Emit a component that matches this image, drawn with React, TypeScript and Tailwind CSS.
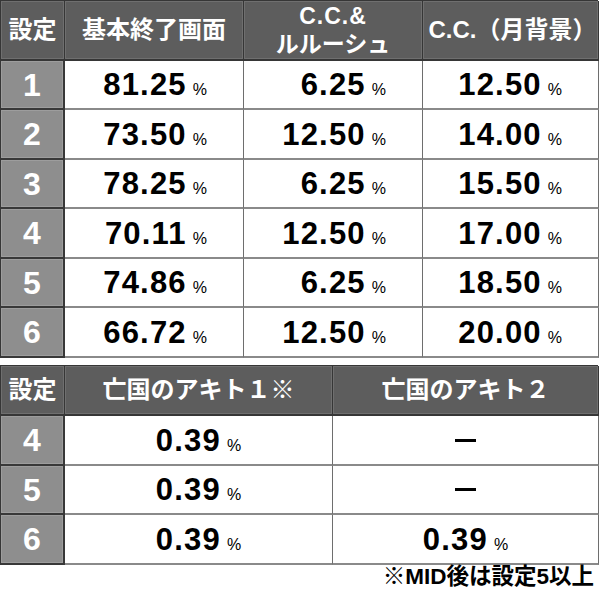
import type { ReactNode } from 'react';

const font = "font-['Liberation_Sans','Noto_Sans_CJK_JP',sans-serif]";

const top = [
  ['1', '81.25', '6.25', '12.50'],
  ['2', '73.50', '12.50', '14.00'],
  ['3', '78.25', '6.25', '15.50'],
  ['4', '70.11', '12.50', '17.00'],
  ['5', '74.86', '6.25', '18.50'],
  ['6', '66.72', '12.50', '20.00'],
];

const bottom: [string, string, string | null][] = [
  ['4', '0.39', null],
  ['5', '0.39', null],
  ['6', '0.39', '0.39'],
];

function HeadCell({ children }: { children: ReactNode }) {
  return (
    <div className="flex items-center justify-center bg-[#5d5d5d] border-r border-b-2 border-[#363636] shadow-[inset_0_0_0_1px_#6f6f6f] text-white font-bold text-[24px] leading-none whitespace-nowrap">
      {children}
    </div>
  );
}

function SetCell({ n }: { n: string }) {
  return (
    <div className="flex items-center justify-center bg-[#8e8e8e] border-r-2 border-b-2 border-[#383838] shadow-[inset_0_0_0_1px_#9d9d9d] text-white font-bold text-[32px] leading-none">
      {n}
    </div>
  );
}

function Value({ v }: { v: string }) {
  return (
    <span className="flex items-baseline">
      <span className="font-bold text-[31px] tracking-[1.2px] leading-none text-black">{v}</span>
      <span className="ml-[6px] text-[16px] leading-none text-black">%</span>
    </span>
  );
}

export default function App() {
  return (
    <div className={`w-[600px] h-[590px] bg-white ${font}`}>
      <div className="w-[598px] grid grid-cols-[64px_179px_179px_176px] grid-rows-[60px_49px_50px_49px_50px_49px_50px] border-l border-t border-[#363636]">
        <HeadCell>設定</HeadCell>
        <HeadCell>基本終了画面</HeadCell>
        <HeadCell>
          <div className="flex flex-col items-center gap-[5px]">
            <span className="text-[23px] tracking-[1px]">C.C.&amp;</span>
            <span className="text-[23px]">ルルーシュ</span>
          </div>
        </HeadCell>
        <HeadCell>
          <span className="text-[24px] pl-[4px]">C.C.（月背景）</span>
        </HeadCell>
        {top.map((r) => (
          <div key={r[0]} className="contents">
            <SetCell n={r[0]} />
            {r.slice(1).map((v, i) => (
              <div
                key={i}
                className="flex items-center justify-end pr-[36px] bg-white border-r border-b-2 border-r-[#6e6e6e] border-b-[#8a8a8a]"
              >
                <Value v={v} />
              </div>
            ))}
          </div>
        ))}
      </div>

      <div className="mt-[7px] w-[598px] grid grid-cols-[64px_268px_266px] grid-rows-[50px_50px_49px_50px] border-l border-t border-[#363636]">
        <HeadCell>設定</HeadCell>
        <HeadCell>亡国のアキト１※</HeadCell>
        <HeadCell>亡国のアキト２</HeadCell>
        {bottom.map((r) => (
          <div key={r[0]} className="contents">
            <SetCell n={r[0]} />
            <div className="flex items-center justify-center bg-white border-r border-b-2 border-r-[#6e6e6e] border-b-[#8a8a8a]">
              <Value v={r[1]} />
            </div>
            <div className="flex items-center justify-center bg-white border-r border-b-2 border-r-[#6e6e6e] border-b-[#8a8a8a]">
              {r[2] ? (
                <Value v={r[2]} />
              ) : (
                <span className="block w-[21px] h-[3px] bg-black" />
              )}
            </div>
          </div>
        ))}
      </div>

      <div className="flex h-[24px] items-center justify-end pr-[6px] text-[22.5px] font-bold leading-none text-black">
        ※MID後は設定5以上
      </div>
    </div>
  );
}
